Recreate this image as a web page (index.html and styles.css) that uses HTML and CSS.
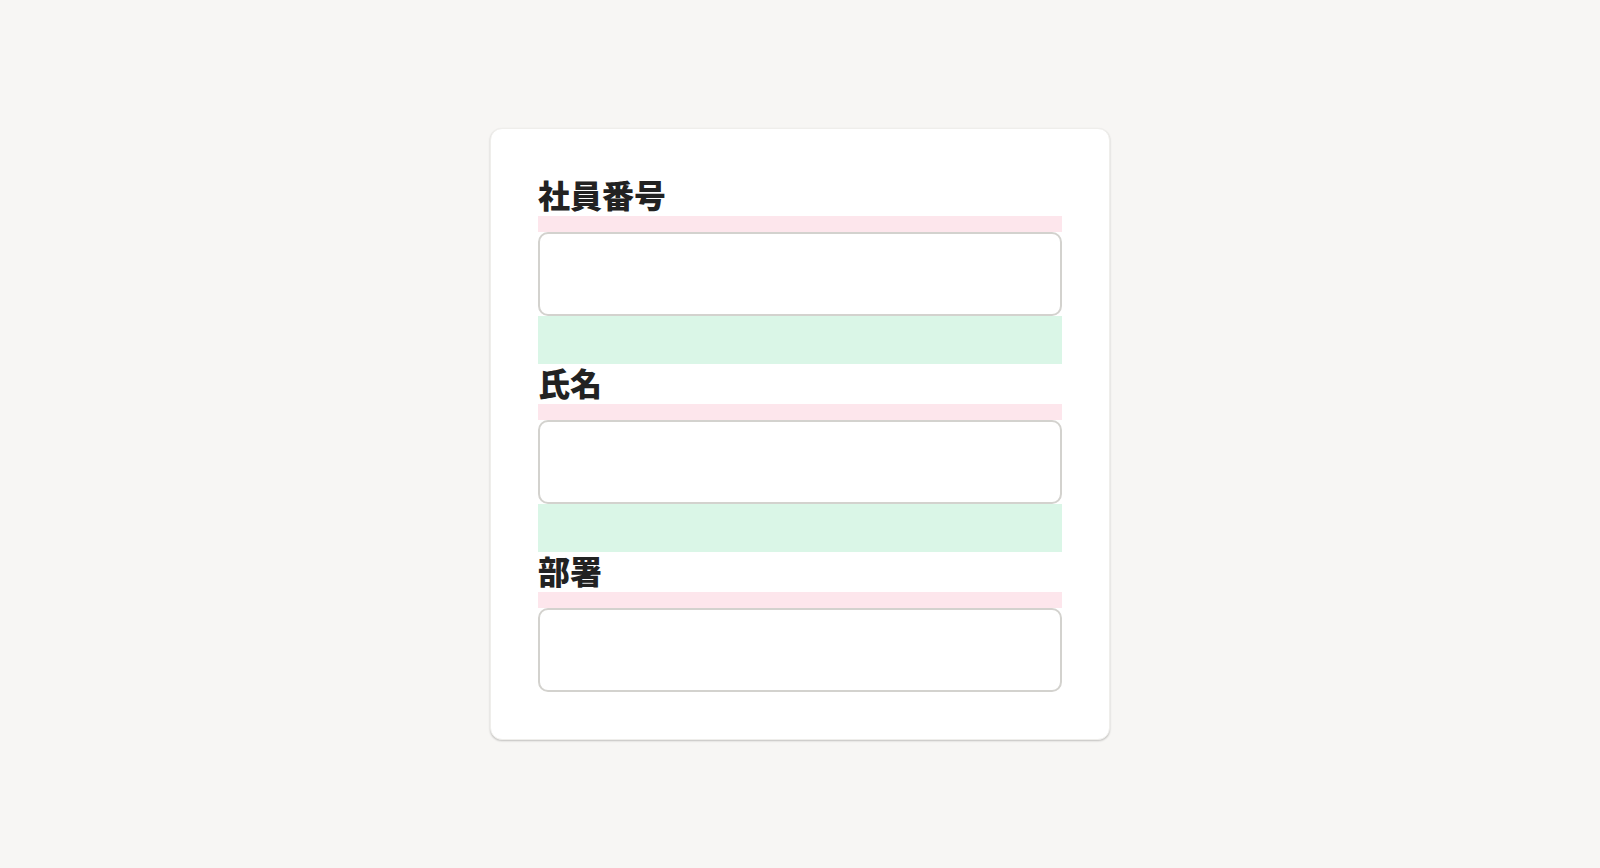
FILE: index.html
```html
<!DOCTYPE html>
<html lang="ja">
<head>
<meta charset="utf-8">
<title>フォーム</title>
<link rel="stylesheet" href="styles.css">
</head>
<body>
<main class="page">
  <form class="card">
    <div class="field">
      <label class="label" for="emp-no">社員番号</label>
      <div class="gap-pink"></div>
      <input class="input" id="emp-no" type="text">
    </div>
    <div class="gap-green"></div>
    <div class="field">
      <label class="label" for="name">氏名</label>
      <div class="gap-pink"></div>
      <input class="input" id="name" type="text">
    </div>
    <div class="gap-green"></div>
    <div class="field">
      <label class="label" for="dept">部署</label>
      <div class="gap-pink"></div>
      <input class="input" id="dept" type="text">
    </div>
  </form>
</main>
</body>
</html>
```
FILE: styles.css
```css
* { box-sizing: border-box; }
html, body { margin: 0; padding: 0; }
body {
  background: #f7f6f4;
  font-family: "Noto Sans CJK JP", "Noto Sans", sans-serif;
  color: #222;
}
.page {
  width: 1600px;
  height: 868px;
  display: flex;
  align-items: center;
  justify-content: center;
}
.card {
  width: 620px;
  background: #fff;
  border: 1px solid #efeeeb;
  border-radius: 12px;
  box-shadow: 0 1px 2px rgba(0,0,0,0.22);
  padding: 47px;
  display: flex;
  flex-direction: column;
}
.field {
  display: flex;
  flex-direction: column;
}
.label {
  font-size: 32px;
  font-weight: 900;
  line-height: 36px;
  height: 40px;
  padding-bottom: 4px;
  color: #222;
}
.gap-pink {
  height: 16px;
  background: #fde6ec;
}
.gap-green {
  height: 48px;
  background: #daf6e7;
}
.input {
  display: block;
  width: 100%;
  height: 84px;
  border: 2px solid #d3d2ce;
  border-radius: 10px;
  background: #fff;
  font: inherit;
  margin: 0;
  padding: 0 16px;
  outline: none;
}
```
